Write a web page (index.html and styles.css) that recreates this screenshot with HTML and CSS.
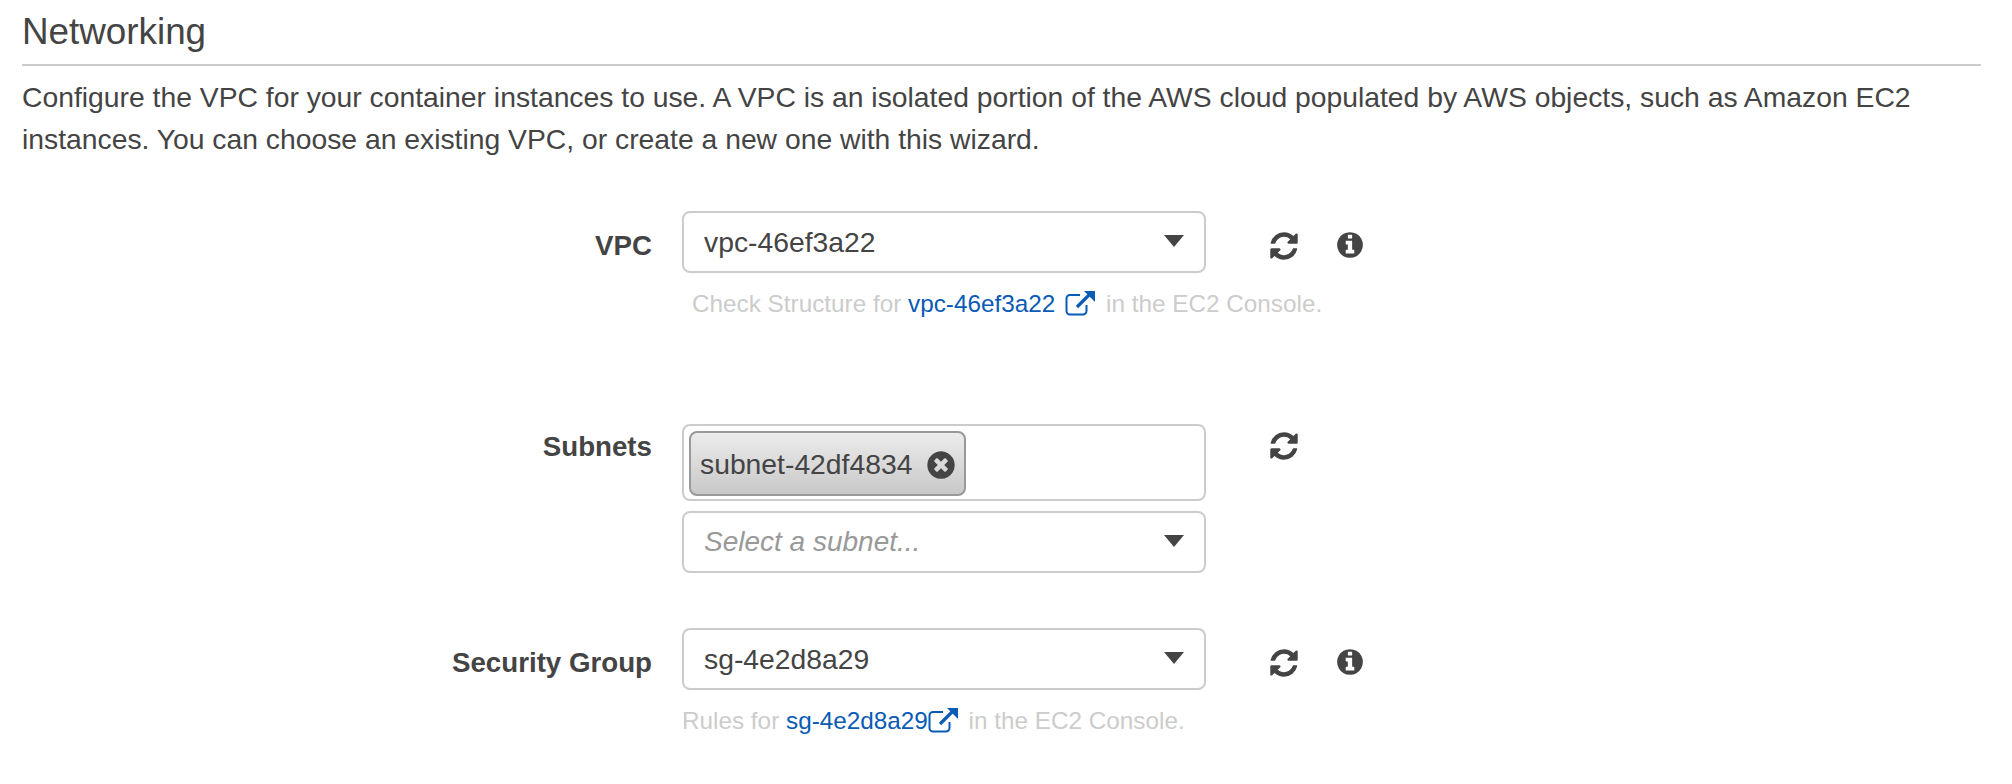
FILE: index.html
```html
<!DOCTYPE html>
<html lang="en">
<head>
    <meta charset="UTF-8">
    <title>Networking</title>
    <link rel="stylesheet" href="styles.css">
</head>
<body>
<svg class="sprites" width="0" height="0">
    <symbol id="icon_refresh" viewBox="0 0 1792 1792"><path d="M1639 1056q0 5-1 7-64 268-268 434.5t-478 166.5q-146 0-282.5-55t-243.5-157l-129 129q-19 19-45 19t-45-19-19-45v-448q0-26 19-45t45-19h448q26 0 45 19t19 45-19 45l-137 137q71 66 161 102t187 36q134 0 250-65t186-179q11-17 53-117 8-23 30-23h192q13 0 22.5 9.5t9.5 22.5zm25-800v448q0 26-19 45t-45 19h-448q-26 0-45-19t-19-45 19-45l138-138q-148-137-349-137-134 0-250 65t-186 179q-11 17-53 117-8 23-30 23h-199q-13 0-22.5-9.5t-9.5-22.5v-7q65-268 270-434.5t480-166.5q146 0 284 55.5t245 156.5l130-129q19-19 45-19t45 19 19 45z"/></symbol>
    <symbol id="icon_info" viewBox="0 0 1792 1792"><path d="M1152 1376v-160q0-14-9-23t-23-9h-96v-512q0-14-9-23t-23-9h-320q-14 0-23 9t-9 23v160q0 14 9 23t23 9h96v320h-96q-14 0-23 9t-9 23v160q0 14 9 23t23 9h448q14 0 23-9t9-23zm-128-896v-160q0-14-9-23t-23-9h-192q-14 0-23 9t-9 23v160q0 14 9 23t23 9h192q14 0 23-9t9-23zm640 416q0 209-103 385.5t-279.5 279.5-385.5 103-385.5-103-279.5-279.5-103-385.5 103-385.5 279.5-279.5 385.5-103 385.5 103 279.5 279.5 103 385.5z"/></symbol>
    <symbol id="icon_close" viewBox="0 0 1792 1792"><path d="M1277 1122q0-26-19-45l-181-181 181-181q19-19 19-45 0-27-19-46l-90-90q-19-19-46-19-26 0-45 19l-181 181-181-181q-19-19-45-19-27 0-46 19l-90 90q-19 19-19 46 0 26 19 45l181 181-181 181q-19 19-19 45 0 27 19 46l90 90q19 19 46 19 26 0 45-19l181-181 181 181q19 19 45 19 27 0 46-19l90-90q19-19 19-46zm387-226q0 209-103 385.5t-279.5 279.5-385.5 103-385.5-103-279.5-279.5-103-385.5 103-385.5 279.5-279.5 385.5-103 385.5 103 279.5 279.5 103 385.5z"/></symbol>
    <symbol id="icon_external" viewBox="0 0 30 25">
        <path d="M15 4H5a3.5 3.5 0 0 0-3.5 3.5V20A3.5 3.5 0 0 0 5 23.500H18a3.500 3.500 0 0 0 3.500-3.500V14" fill="none" stroke="currentColor" stroke-width="2"/>
        <path d="M12 16L25 3" fill="none" stroke="currentColor" stroke-width="3.200"/>
        <path d="M19 0H30V11z" fill="currentColor"/>
    </symbol>
</svg>

<div class="page">
    <h2 class="section_title">Networking</h2>
    <p class="section_desc">Configure the VPC for your container instances to use. A VPC is an isolated portion of the AWS cloud populated by AWS objects, such as Amazon EC2 instances. You can choose an existing VPC, or create a new one with this wizard.</p>

    <div class="form">
        <!--VPC-->
        <div class="form_row row_vpc">
            <label class="form_label">VPC</label>
            <div class="form_control">
                <div class="select">
                    <span class="select_value">vpc-46ef3a22</span>
                    <span class="select_caret"></span>
                </div>
                <div class="help help_indent">Check Structure for <a href="#" class="help_link">vpc-46ef3a22<svg class="icon_external icon_external_gap"><use href="#icon_external"/></svg></a> in the EC2 Console.</div>
            </div>
            <div class="form_actions">
                <svg class="icon_refresh"><use href="#icon_refresh"/></svg>
                <svg class="icon_info"><use href="#icon_info"/></svg>
            </div>
        </div>

        <!--Subnets-->
        <div class="form_row row_subnets">
            <label class="form_label">Subnets</label>
            <div class="form_control">
                <div class="multi">
                    <span class="tag">subnet-42df4834<svg class="icon_close"><use href="#icon_close"/></svg></span>
                </div>
                <div class="select select_second">
                    <span class="select_placeholder">Select a subnet...</span>
                    <span class="select_caret"></span>
                </div>
            </div>
            <div class="form_actions">
                <svg class="icon_refresh"><use href="#icon_refresh"/></svg>
            </div>
        </div>

        <!--Security Group-->
        <div class="form_row">
            <label class="form_label">Security Group</label>
            <div class="form_control">
                <div class="select">
                    <span class="select_value">sg-4e2d8a29</span>
                    <span class="select_caret"></span>
                </div>
                <div class="help">Rules for <a href="#" class="help_link">sg-4e2d8a29<svg class="icon_external"><use href="#icon_external"/></svg></a> in the EC2 Console.</div>
            </div>
            <div class="form_actions">
                <svg class="icon_refresh"><use href="#icon_refresh"/></svg>
                <svg class="icon_info"><use href="#icon_info"/></svg>
            </div>
        </div>
    </div>
</div>
</body>
</html>
```

FILE: styles.css
```css
*{
    margin: 0;
    padding: 0;
    box-sizing: border-box;
}
html, body
{
    height: 784px;
    overflow: hidden;
}
body
{
    background: #fff;
    color: #444;
    font-family: "Liberation Sans", Arial, sans-serif;
    font-size: 28.3px;
    line-height: 42px;
}
.sprites
{
    position: absolute;
}
.page
{
    padding: 12px 31px 0 22px;
}
.section_title
{
    font-size: 36.8px;
    font-weight: normal;
    line-height: 40px;
    padding-bottom: 12px;
    border-bottom: 2px solid #ccc;
}
.section_desc
{
    margin-top: 10px;
}
.form
{
    margin-top: 51px;
}
.form_row
{
    display: flex;
    align-items: flex-start;
}
.row_vpc
{
    margin-bottom: 102px;
}
.row_subnets
{
    margin-bottom: 55px;
}
.form_label
{
    width: 630px;
    padding-top: 14px;
    text-align: right;
    font-size: 27.7px;
    font-weight: bold;
}
.row_subnets .form_label
{
    padding-top: 2px;
}
.form_control
{
    width: 524px;
    margin-left: 30px;
}
.select
{
    height: 62px;
    padding: 0 20px;
    display: flex;
    align-items: center;
    justify-content: space-between;
    border: 2px solid #ccc;
    border-radius: 8px;
    background: #fff;
}
.select_second
{
    margin-top: 10px;
}
.select_placeholder
{
    color: #999;
    font-size: 28px;
    font-style: italic;
}
.select_caret
{
    width: 0;
    height: 0;
    border-left: 10.5px solid transparent;
    border-right: 10.5px solid transparent;
    border-top: 12px solid #444;
    margin-top: -2px;
}
.multi
{
    height: 77px;
    padding: 5px;
    border: 2px solid #ccc;
    border-radius: 8px;
}
.tag
{
    display: inline-flex;
    align-items: center;
    height: 65px;
    width: 277px;
    padding-left: 9px;
    border: 2px solid #999;
    border-radius: 8px;
    background: linear-gradient(#ececec, #c8c8c8);
}
.icon_close
{
    width: 32px;
    height: 32px;
    margin-left: 13px;
    margin-top: 2px;
    fill: #444;
}
.help
{
    margin-top: 13px;
    font-size: 24.3px;
    line-height: 36px;
    color: #ccc;
    white-space: nowrap;
}
.help_indent
{
    padding-left: 10px;
}
.help_link
{
    color: #0a5bb5;
    text-decoration: none;
}
.icon_external
{
    width: 30px;
    height: 25px;
    margin-right: 4px;
    vertical-align: -4px;
}
.icon_external_gap
{
    margin-left: 10px;
}
.form_actions
{
    display: flex;
    align-items: flex-start;
    gap: 35px;
    margin-left: 62px;
    padding-top: 19px;
}
.row_subnets .form_actions
{
    padding-top: 6px;
}
.icon_refresh
{
    width: 32px;
    height: 32px;
    fill: #444;
}
.icon_info
{
    width: 30px;
    height: 30px;
    fill: #444;
}
```
